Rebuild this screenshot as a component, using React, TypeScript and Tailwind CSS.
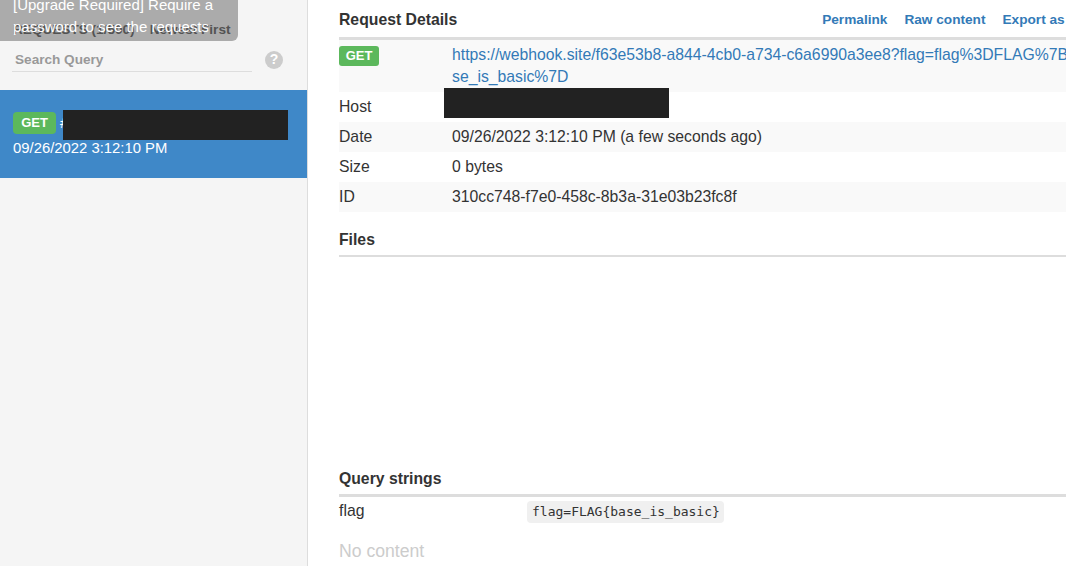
const rows = [
  { label: 'Host', value: '', shaded: false },
  { label: 'Date', value: '09/26/2022 3:12:10 PM (a few seconds ago)', shaded: true },
  { label: 'Size', value: '0 bytes', shaded: false },
  { label: 'ID', value: '310cc748-f7e0-458c-8b3a-31e03b23fc8f', shaded: true },
];

function SectionTitle({ children }: { children: string }) {
  return <h4 className="text-[15.75px] leading-[20px] font-bold text-[#333]">{children}</h4>;
}

function Sidebar() {
  return (
    <aside className="relative w-[308px] h-[566px] shrink-0 bg-[#f5f5f5] border-r border-[#ddd] overflow-hidden">
      <div className="flex items-center gap-[15px] pl-[13px] pt-[21px] h-[40px] text-[13.6px] font-bold text-[#777] whitespace-nowrap">
        <span>REQUESTS (1/500)</span>
        <span>Newest First</span>
      </div>
      <div className="flex items-center pl-[12px] mt-[7px]">
        <div className="w-[240px] h-[25px] border-b border-[#ddd] pl-[3px] text-[13.6px] leading-[26px] font-bold text-[#999]">
          Search Query
        </div>
        <span className="ml-[13px] flex items-center justify-center w-[18px] h-[18px] rounded-full bg-[#ccc] text-white text-[14px] font-bold">?</span>
      </div>
      <div className="mt-[18px] h-[88px] bg-[#3f88c8] pl-[13px] pt-[22px] text-white text-[14.85px] leading-[20px]">
        <div className="flex items-center h-[22px]">
          <span className="flex items-center justify-center w-[43px] h-[22px] rounded-[4px] bg-[#5cb85c] text-[13px] font-bold">GET</span>
          <span className="ml-[4px]">#</span>
        </div>
        <div className="mt-[4px]">09/26/2022 3:12:10 PM</div>
      </div>
      <div className="absolute left-[63px] top-[110px] w-[225px] h-[30px] bg-[#222]" />
      <div className="absolute left-0 top-[-6px] w-[238px] h-[47px] rounded-br-[6px] bg-black/30 pl-[13px] text-[15px] leading-[22px] text-white">
        [Upgrade Required] Require a password to see the requests
      </div>
    </aside>
  );
}

function Details() {
  return (
    <main className="relative flex-1 min-w-0 h-[566px] overflow-hidden pl-[31px] text-[#333]">
      <div className="w-[800px]">
        <div className="flex items-center h-[40px] pt-[3px] border-b-[3px] border-[#ddd]">
          <SectionTitle>Request Details</SectionTitle>
          <div className="ml-[365px] flex gap-[17px] text-[13.65px] font-bold text-[#337ab7] whitespace-nowrap">
            <span>Permalink</span>
            <span>Raw content</span>
            <span>Export as</span>
          </div>
        </div>
        <div className="flex h-[52px] bg-[#f9f9f9] text-[15.75px]">
          <div className="w-[113px] pt-[6px]">
            <span className="flex items-center justify-center w-[40px] h-[20px] rounded-[3px] bg-[#5cb85c] text-white text-[13px] font-bold">GET</span>
          </div>
          <div className="w-[640px] pt-[4px] leading-[22px] text-[#337ab7] break-all">
            https://webhook.site/f63e53b8-a844-4cb0-a734-c6a6990a3ee8?flag=flag%3DFLAG%7Bbase_is_basic%7D
          </div>
        </div>
        {rows.map((r) => (
          <div key={r.label} className={`flex h-[30px] items-center text-[15.75px] ${r.shaded ? 'bg-[#f9f9f9]' : ''}`}>
            <div className="w-[113px]">{r.label}</div>
            <div>{r.value}</div>
          </div>
        ))}
        <div className="mt-[18px] h-[27px] border-b-[2px] border-[#ddd]">
          <SectionTitle>Files</SectionTitle>
        </div>
        <div className="mt-[212px] h-[28px] border-b-[3px] border-[#ddd]">
          <SectionTitle>Query strings</SectionTitle>
        </div>
        <div className="flex h-[30px] items-center text-[15.75px]">
          <div className="w-[188px] mb-[3px]">flag</div>
          <code className="pl-[5px] pr-[4px] h-[22px] rounded-[4px] bg-[#f0f0f0] text-[13px] leading-[22px] text-[#333] font-['DejaVu_Sans_Mono',monospace]">
            flag=FLAG{'{'}base_is_basic{'}'}
          </code>
        </div>
        <div className="mt-[12px] text-[17.6px] leading-[24px] text-[#ccc]">No content</div>
      </div>
      <div className="absolute left-[136px] top-[88px] w-[225px] h-[30px] bg-[#222]" />
    </main>
  );
}

export default function App() {
  return (
    <div className="flex w-[1066px] h-[566px] overflow-hidden bg-white font-['Liberation_Sans',Arial,sans-serif]">
      <Sidebar />
      <Details />
    </div>
  );
}
